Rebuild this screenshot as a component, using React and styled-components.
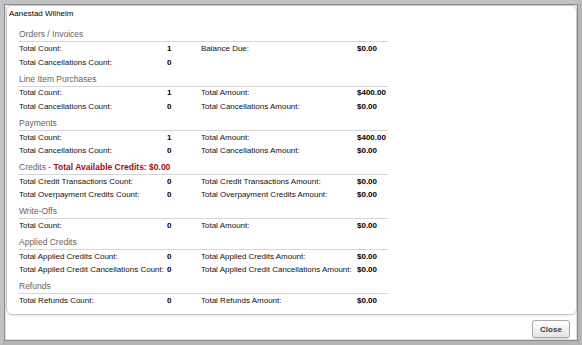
import React from 'react';
import styled, { createGlobalStyle } from 'styled-components';

const GlobalStyle = createGlobalStyle`
  html, body {
    margin: 0;
    padding: 0;
    background: #ffffff;
  }
  body {
    font-family: "Liberation Sans", Arial, sans-serif;
  }
`;

const sections = [
  {
    title: 'Orders / Invoices',
    rows: [
      ['Total Count:', '1', 'Balance Due:', '$0.00'],
      ['Total Cancellations Count:', '0', '', ''],
    ],
  },
  {
    title: 'Line Item Purchases',
    rows: [
      ['Total Count:', '1', 'Total Amount:', '$400.00'],
      ['Total Cancellations Count:', '0', 'Total Cancellations Amount:', '$0.00'],
    ],
  },
  {
    title: 'Payments',
    rows: [
      ['Total Count:', '1', 'Total Amount:', '$400.00'],
      ['Total Cancellations Count:', '0', 'Total Cancellations Amount:', '$0.00'],
    ],
  },
  {
    title: 'Credits',
    extra: 'Total Available Credits: $0.00',
    rows: [
      ['Total Credit Transactions Count:', '0', 'Total Credit Transactions Amount:', '$0.00'],
      ['Total Overpayment Credits Count:', '0', 'Total Overpayment Credits Amount:', '$0.00'],
    ],
  },
  {
    title: 'Write-Offs',
    rows: [['Total Count:', '0', 'Total Amount:', '$0.00']],
  },
  {
    title: 'Applied Credits',
    rows: [
      ['Total Applied Credits Count:', '0', 'Total Applied Credits Amount:', '$0.00'],
      ['Total Applied Credit Cancellations Count:', '0', 'Total Applied Credit Cancellations Amount:', '$0.00'],
    ],
  },
  {
    title: 'Refunds',
    rows: [['Total Refunds Count:', '0', 'Total Refunds Amount:', '$0.00']],
  },
];

const App = () => {
  return (
    <>
      <GlobalStyle />
      <Frame>
        <Panel>
          <Title>Aanestad Wilhelm</Title>
          <Sections>
            {sections.map((section) => (
              <Section key={section.title}>
                <SectionHeader>
                  {section.title}
                  {section.extra && (
                    <>
                      {' - '}
                      <Highlight>{section.extra}</Highlight>
                    </>
                  )}
                </SectionHeader>
                {section.rows.map((row, i) => (
                  <Row key={i}>
                    <Label>{row[0]}</Label>
                    <Value>{row[1]}</Value>
                    <Label>{row[2]}</Label>
                    <Value>{row[3]}</Value>
                  </Row>
                ))}
              </Section>
            ))}
          </Sections>
        </Panel>
        <Footer>
          <CloseButton>Close</CloseButton>
        </Footer>
      </Frame>
    </>
  );
};

const Frame = styled.div`
  box-sizing: border-box;
  width: 582px;
  height: 345px;
  display: flex;
  flex-direction: column;
  background: #ffffff;
  border: 4px solid #b5b5b5;
  border-top-color: #c2c2c2;
  border-left-color: #c2c2c2;
  box-shadow: inset 0 0 0 1px #8a8a8a, inset 0 0 0 2px #e2e2e2;
`;

const Panel = styled.div`
  box-sizing: border-box;
  height: 310px;
  margin: 1px 1px 0 2px;
  border: 1px solid #c9c9c9;
  border-radius: 6px;
  box-shadow: 0 1px 1px rgba(0, 0, 0, 0.08);
  display: flex;
  flex-direction: column;
`;

const Title = styled.div`
  padding: 2px 0 0 2px;
  font-size: 8px;
  line-height: 11px;
  color: #000000;
`;

const Sections = styled.div`
  display: flex;
  flex-direction: column;
  width: 370px;
  margin: 6px 0 0 11px;
`;

const Section = styled.div`
  display: flex;
  flex-direction: column;
  margin-top: 4.25px;
`;

const SectionHeader = styled.div`
  padding: 0 0 1px 1px;
  border-bottom: 1px solid #d6d6d6;
  font-size: 8.5px;
  line-height: 11px;
  color: #666666;
`;

const Highlight = styled.span`
  color: #a00d0d;
  font-weight: bold;
`;

const Row = styled.div`
  display: grid;
  grid-template-columns: 149px 33px 157px 1fr;
  height: 13.5px;
  align-items: center;
  font-size: 8px;
  line-height: 10px;
`;

const Label = styled.span`
  padding-left: 1px;
  color: #111111;
  white-space: nowrap;
`;

const Value = styled.span`
  color: #000000;
  font-weight: bold;
  white-space: nowrap;
`;

const Footer = styled.div`
  flex: 1;
  display: flex;
  justify-content: flex-end;
  align-items: flex-start;
  padding: 5px 8px 0 0;
`;

const CloseButton = styled.button`
  box-sizing: border-box;
  width: 38px;
  height: 18px;
  padding: 0;
  border: 1px solid #a8a8a8;
  border-radius: 3px;
  background: linear-gradient(#ffffff, #e4e4e4);
  box-shadow: 0 1px 1px rgba(0, 0, 0, 0.15);
  font-family: "Liberation Sans", Arial, sans-serif;
  font-size: 8px;
  font-weight: bold;
  color: #3a3a3a;
`;

export default App;
